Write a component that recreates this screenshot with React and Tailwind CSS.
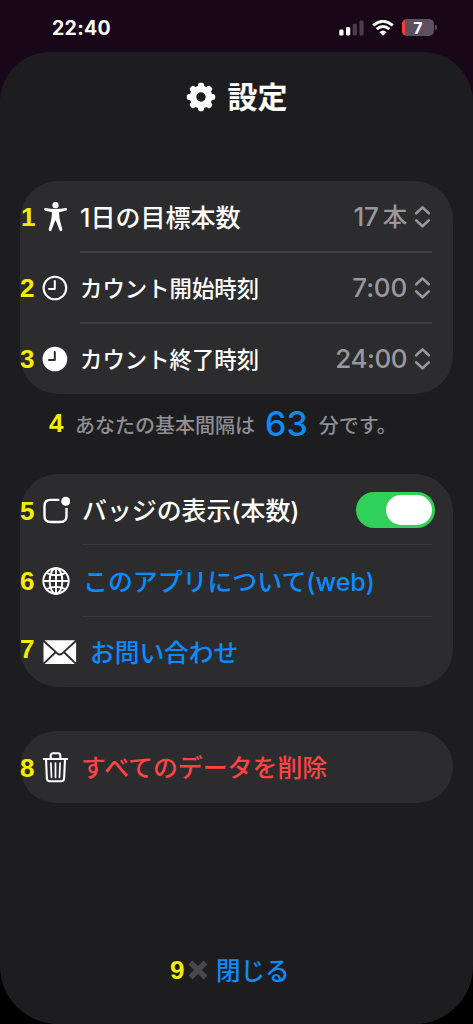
import React from 'react';

const PersonIcon = () => (
  <svg width="24" height="30" viewBox="0 0 24 30" className="ml-0.5 shrink-0" fill="white">
    <circle cx="11.5" cy="3.2" r="3.1" />
    <path d="M1.2 6.1 Q0 6.2 0 7.3 Q0 8.4 1.2 8.7 L7.2 9.9 Q7.9 10.1 7.9 10.9 Q7.9 15 6.9 19 L4.7 27.3 Q4.5 28.7 5.7 29.1 Q7 29.4 7.5 28.2 L11.1 18.8 Q11.5 18 11.9 18.8 L15.5 28.2 Q16 29.4 17.3 29.1 Q18.5 28.7 18.3 27.3 L16.1 19 Q15.1 15 15.1 10.9 Q15.1 10.1 15.8 9.9 L21.8 8.7 Q23 8.4 23 7.3 Q23 6.2 21.8 6.1 Q17 7.1 11.5 7.1 Q6 7.1 1.2 6.1 Z" />
  </svg>
);

const ClockIcon = ({ filled }) => (
  <svg width="26" height="26" viewBox="0 0 26 26" className="shrink-0" fill="none" strokeLinecap="round" strokeLinejoin="round">
    <circle cx="12.9" cy="13" r="11.3" fill={filled ? 'white' : 'none'} stroke="white" strokeWidth="2.1" />
    <path d="M12.8 5.9 V13.9 H7" stroke={filled ? '#2c2c2e' : 'white'} strokeWidth="2" />
  </svg>
);

const BadgeIcon = () => (
  <svg width="28" height="28" viewBox="0 0 28 28" className="shrink-0" fill="none">
    <path d="M17.4 3.9 H8.6 Q2.5 3.9 2.5 10 V19.9 Q2.5 26 8.6 26 H18.4 Q24.5 26 24.5 19.9 V12" stroke="white" strokeWidth="2.4" />
    <circle cx="23.7" cy="5.3" r="4.5" fill="white" />
  </svg>
);

const GlobeIcon = () => (
  <svg width="28" height="28" viewBox="0 0 28 28" className="shrink-0" fill="none" stroke="white" strokeWidth="1.9">
    <circle cx="14" cy="14" r="12.7" />
    <ellipse cx="14" cy="14" rx="6.4" ry="12.7" />
    <path d="M14 1.3 V26.7 M1.3 14 H26.7 M4.5 5.8 Q14 10.6 23.5 5.8 M4.5 22.2 Q14 17.4 23.5 22.2" />
  </svg>
);

const MailIcon = () => (
  <svg width="34" height="26" viewBox="0 0 34 26" className="ml-px shrink-0">
    <rect x="0.5" y="1.3" width="32.6" height="23.6" rx="1.8" fill="white" />
    <path d="M0.5 1.8 L14.3 14.4 Q16.8 16.4 19.3 14.4 L33.1 1.8 M0.8 24.6 L12.5 13.2 M32.8 24.6 L21.1 13.2" fill="none" stroke="#2c2c2e" strokeWidth="1.9" />
  </svg>
);

const TrashIcon = () => (
  <svg width="27" height="32" viewBox="0 0 27 32" className="shrink-0" fill="none" stroke="white" strokeWidth="2.1" strokeLinecap="round" strokeLinejoin="round">
    <path d="M1.8 8 H25.2 M8.7 7.8 V4.6 Q8.7 2.3 11 2.3 H16 Q18.3 2.3 18.3 4.6 V7.8 M4 8.3 L4.9 27.5 Q5.1 30.3 7.7 30.3 H19.3 Q21.9 30.3 22.1 27.5 L23 8.3" />
    <path d="M8.9 12 L9.5 26.5 M13.5 12 V26.5 M18.1 12 L17.5 26.5" strokeWidth="1.7" />
  </svg>
);

const GearIcon = () => (
  <svg width="30" height="30" viewBox="-15 -15 30 30" className="shrink-0" fill="white">
    <path fillRule="evenodd" d="M0 -11.2 A11.2 11.2 0 1 1 0 11.2 A11.2 11.2 0 1 1 0 -11.2 M0 -4.7 A4.7 4.7 0 1 0 0 4.7 A4.7 4.7 0 1 0 0 -4.7" />
    {[0, 45, 90, 135, 180, 225, 270, 315].map((angle) => (
      <path key={angle} transform={`rotate(${angle})`} d="M-3.6 -9.5 L-2.8 -12.8 Q-2.4 -14.2 -1 -14.2 H1 Q2.4 -14.2 2.8 -12.8 L3.6 -9.5 Z" />
    ))}
  </svg>
);

const UpDownIcon = () => (
  <svg width="17" height="24" viewBox="0 0 17 24" className="ml-[7px] shrink-0" fill="none" stroke="#98989f" strokeWidth="2.6" strokeLinecap="round" strokeLinejoin="round">
    <path d="M2.2 8.3 L8.5 2.4 L14.8 8.3 M2.2 15.4 L8.5 21.3 L14.8 15.4" />
  </svg>
);

const StatusIcons = () => (
  <div className="flex items-center">
    <svg width="25" height="16" viewBox="0 0 25 16" fill="white">
      <rect x="0.3" y="9.5" width="4.2" height="6" rx="1.2" />
      <rect x="7" y="7" width="4.2" height="8.5" rx="1.2" />
      <rect x="13.7" y="3.7" width="4.2" height="11.8" rx="1.2" opacity="0.22" />
      <rect x="20.4" y="0.4" width="4.2" height="15.1" rx="1.2" opacity="0.22" />
    </svg>
    <svg width="22" height="16" viewBox="0 0 22 16" className="ml-2" fill="none" stroke="white" strokeWidth="2.9">
      <path d="M1.2 5.4 Q11 -2.8 20.8 5.4 M4.7 9.1 Q11 3.8 17.3 9.1" />
      <path d="M7.4 12.2 Q11 9 14.6 12.2 L11 15.7 Z" fill="white" stroke="none" />
    </svg>
    <div className="ml-2 flex h-[17px] w-8 items-center justify-center overflow-hidden rounded-[5px] bg-[#5d505e] bg-linear-to-r from-[#ff3b3b] from-8% to-[#5d505e] to-8% text-[16px] font-bold leading-none">
      7
    </div>
    <div className="ml-px h-[5px] w-0.5 rounded-r-full bg-[#5d505e]" />
  </div>
);

const Row = ({ number, numberClass = '', icon, label, labelClass, children }) => (
  <div className="flex h-[71px] items-center">
    <span className={`w-[22px] shrink-0 font-['Liberation_Sans'] text-[26px] font-bold leading-none text-[#f6ed00] ${numberClass}`}>{number}</span>
    <div className="flex w-[38px] shrink-0 items-center">{icon}</div>
    <span className={`whitespace-nowrap pt-[3px] leading-none ${labelClass}`}>{label}</span>
    {children}
  </div>
);

const Value = ({ children }) => (
  <div className="ml-auto mr-[22px] flex items-center text-[26px] font-medium leading-none tracking-[-0.2px] text-[#98989f]">
    {children}
    <UpDownIcon />
  </div>
);

const Divider = ({ className }) => <div className={`mr-[21px] bg-[#3d3d40] ${className}`} />;

const App = () => {
  const [badge, setBadge] = React.useState(true);

  return (
    <div className="flex h-[1024px] w-[473px] flex-col overflow-hidden bg-linear-to-b from-[#180719] from-50% to-black to-90% font-['Inter','Noto_Sans_CJK_JP',sans-serif] font-medium text-white">
      <header className="flex h-[52px] shrink-0 items-center justify-between pl-[52px] pr-9 pt-[3px]">
        <span className="pt-0.5 text-[19.5px] font-bold leading-none tracking-[0.3px]">22:40</span>
        <StatusIcons />
      </header>

      <main className="flex h-[972px] flex-col rounded-t-[50px] rounded-b-[58px] bg-[#1d1d1f] px-5">
        <h1 className="mt-[29px] flex h-8 items-center justify-center text-[30px] font-bold leading-none">
          <GearIcon />
          <span className="ml-3">設定</span>
        </h1>

        <section className="mt-[68px] h-[213px] shrink-0 rounded-[38px] bg-[#2c2c2e]">
          <Row number="1" numberClass="pl-px" icon={<PersonIcon />} label="1日の目標本数" labelClass="text-[25px]">
            <Value>17<span className="ml-1 pt-0.5 text-[24.5px]">本</span></Value>
          </Row>
          <Divider className="-my-px ml-[60px] h-0.5" />
          <Row number="2" icon={<ClockIcon />} label="カウント開始時刻" labelClass="text-[22.4px]">
            <Value>7:00</Value>
          </Row>
          <Divider className="-my-px ml-[60px] h-0.5" />
          <Row number="3" icon={<ClockIcon filled />} label="カウント終了時刻" labelClass="text-[22.4px]">
            <Value><span className="tracking-[-0.5px]">24:00</span></Value>
          </Row>
        </section>

        <p className="flex h-20 shrink-0 items-center pb-5 pl-7 text-[20px] leading-none text-[#8e8e93]">
          <span className="w-[27px] pb-[3px] pl-px font-['Liberation_Sans'] text-[26px] font-bold text-[#f6ed00]">4</span>
          <span className="whitespace-nowrap pt-[3px]">あなたの基本間隔は</span>
          <span className="ml-2.5 text-[34px] font-medium text-[#0a8cff]">63</span>
          <span className="ml-[11px] whitespace-nowrap pt-[3px]">分です。</span>
        </p>

        <section className="h-[213px] shrink-0 rounded-[38px] bg-[#2c2c2e]">
          <Row number="5" numberClass="pt-[3px]" icon={<BadgeIcon />} label="バッジの表示(本数)" labelClass="ml-0.5 text-[24.9px]">
            <button
              onClick={() => setBadge(!badge)}
              className={`ml-auto mr-[18px] flex h-9 w-[79px] items-center rounded-full px-[3px] ${badge ? 'justify-end bg-[#30d158]' : 'justify-start bg-[#48484a]'}`}
            >
              <span className="h-[30px] w-[46px] rounded-full bg-white" />
            </button>
          </Row>
          <Divider className="-mt-px ml-[62px] h-px" />
          <Row number="6" icon={<GlobeIcon />} label="このアプリについて(web)" labelClass="ml-[3px] text-[24.9px] text-[#0a8cff]" />
          <Divider className="-mb-px ml-[62px] h-px" />
          <Row number="7" numberClass="pb-[5px]" icon={<MailIcon />} label="お問い合わせ" labelClass="ml-2.5 text-[24.7px] text-[#0a8cff]" />
        </section>

        <section className="mt-11 h-[72px] shrink-0 rounded-full bg-[#2c2c2e]">
          <Row number="8" numberClass="pt-0.5" icon={<TrashIcon />} label="すべてのデータを削除" labelClass="ml-px text-[24.9px] text-[#ff4245]" />
        </section>

        <footer className="mb-9 mt-auto flex h-9 items-center pl-[150px] leading-none">
          <span className="w-[18px] font-['Liberation_Sans'] text-[26px] font-bold text-[#f6ed00]">9</span>
          <svg width="20" height="20" viewBox="0 0 20 20" stroke="#48484a" strokeWidth="5.4">
            <path d="M2.5 2.5 L17.5 17.5 M17.5 2.5 L2.5 17.5" />
          </svg>
          <button className="ml-2 pt-0.5 text-[24.5px] leading-none text-[#0a8cff]">閉じる</button>
        </footer>
      </main>
    </div>
  );
};

export default App;
